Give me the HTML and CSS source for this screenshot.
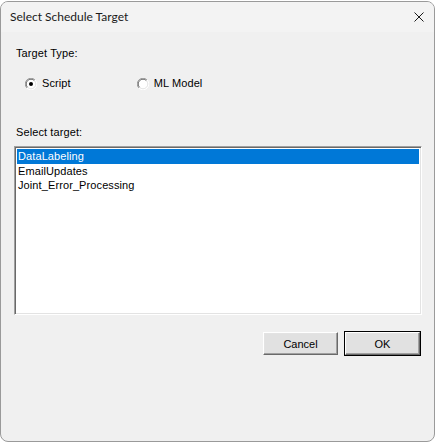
FILE: index.html
```html
<!DOCTYPE html>
<html lang="en">
<head>
    <meta charset="UTF-8">
    <meta name="viewport" content="width=device-width, initial-scale=1.0">
    <title>Select Schedule Target</title>
    <link rel="stylesheet" href="styles.css">
</head>
<body>
    <div class="dialog">
        <div class="titlebar">
            <span class="title">Select Schedule Target</span>
            <svg class="close" width="10" height="10" viewBox="0 0 10 10">
                <path d="M0.5 0.5 L9.5 9.5 M9.5 0.5 L0.5 9.5" stroke="#1a1a1a" stroke-width="1" fill="none"/>
            </svg>
        </div>

        <div class="content">
            <div class="label">Target Type:</div>

            <div class="radios">
                <label class="radio">
                    <svg class="radio-box" width="12" height="12" viewBox="0 0 12 12">
                        <circle cx="6" cy="6" r="5.5" fill="#fff"/>
                        <path d="M1.9 10.1 A5.5 5.5 0 0 1 10.1 1.9" stroke="#a0a0a0" fill="none"/>
                        <path d="M10.1 1.9 A5.5 5.5 0 0 1 1.9 10.1" stroke="#fff" fill="none"/>
                        <path d="M2.6 9.4 A4.5 4.5 0 0 1 9.4 2.6" stroke="#696969" fill="none"/>
                        <path d="M9.4 2.6 A4.5 4.5 0 0 1 2.6 9.4" stroke="#e3e3e3" fill="none"/>
                        <circle cx="6" cy="6" r="2" fill="#000"/>
                    </svg>
                    <span>Script</span>
                </label>
                <label class="radio">
                    <svg class="radio-box" width="12" height="12" viewBox="0 0 12 12">
                        <circle cx="6" cy="6" r="5.5" fill="#fff"/>
                        <path d="M1.9 10.1 A5.5 5.5 0 0 1 10.1 1.9" stroke="#a0a0a0" fill="none"/>
                        <path d="M10.1 1.9 A5.5 5.5 0 0 1 1.9 10.1" stroke="#fff" fill="none"/>
                        <path d="M2.6 9.4 A4.5 4.5 0 0 1 9.4 2.6" stroke="#696969" fill="none"/>
                        <path d="M9.4 2.6 A4.5 4.5 0 0 1 2.6 9.4" stroke="#e3e3e3" fill="none"/>
                    </svg>
                    <span>ML Model</span>
                </label>
            </div>

            <div class="label">Select target:</div>

            <ul class="listbox">
                <li class="selected">DataLabeling</li>
                <li>EmailUpdates</li>
                <li>Joint_Error_Processing</li>
            </ul>

            <div class="buttons">
                <button class="btn">Cancel</button>
                <button class="btn default">OK</button>
            </div>
        </div>
    </div>
</body>
</html>
```

FILE: styles.css
```css
body {
    margin: 0;
    background-color: #ffffff;
    font-family: 'Liberation Sans', Arial, sans-serif;
    font-size: 11px;
    color: #000000;
}

.dialog {
    margin-top: 1px;
    width: 433px;
    height: 439px;
    border: 1px solid #9a9a9a;
    border-radius: 8px;
    background-color: #f0f0f0;
    overflow: hidden;
    display: flex;
    flex-direction: column;
}

.titlebar {
    height: 30px;
    background-color: #f3f3f3;
    display: flex;
    align-items: center;
    justify-content: space-between;
    padding: 0 10px 0 9px;
    flex-shrink: 0;
}

.title {
    font-family: Lato, 'Noto Sans', sans-serif;
    font-size: 12px;
    color: #1a1a1a;
    margin-top: -2px;
}

.close {
    margin-top: -1px;
}

.content {
    padding: 15px 12px 0 13px;
    display: flex;
    flex-direction: column;
}

.label {
    line-height: 13px;
    padding-left: 2px;
    letter-spacing: 0.1px;
}

.radios {
    display: flex;
    margin-top: 17px;
    margin-left: 11px;
    height: 13px;
    letter-spacing: 0.1px;
}

.radio {
    display: flex;
    align-items: center;
    gap: 5px;
    line-height: 13px;
}

.radio + .radio {
    margin-left: 66px;
}

.radios + .label {
    margin-top: 36px;
}

.listbox {
    list-style: none;
    margin: 7px 0 0 0;
    height: 163px;
    background-color: #ffffff;
    border-top: 1px solid #a0a0a0;
    border-left: 1px solid #a0a0a0;
    border-right: 1px solid #ffffff;
    border-bottom: 1px solid #ffffff;
    box-shadow: inset 1px 1px 0 #696969, inset -1px -1px 0 #e3e3e3;
    padding: 2px 2px;
}

.listbox li {
    height: 14.5px;
    line-height: 14px;
    padding-left: 1px;
    letter-spacing: 0.1px;
}

.listbox li.selected {
    background-color: #0078d7;
    color: #ffffff;
}

.buttons {
    display: flex;
    justify-content: flex-end;
    gap: 7px;
    margin-top: 17px;
    padding-right: 2px;
}

.btn {
    width: 75px;
    height: 23px;
    font-family: 'Liberation Sans', Arial, sans-serif;
    font-size: 11px;
    color: #000000;
    background-color: #e1e1e1;
    border-top: 1px solid #ffffff;
    border-left: 1px solid #ffffff;
    border-right: 1px solid #696969;
    border-bottom: 1px solid #696969;
    box-shadow: inset -1px -1px 0 #a0a0a0, inset 1px 1px 0 #e3e3e3;
    padding: 0;
}

.btn.default {
    outline: 1px solid #000000;
    outline-offset: 0;
}
```
